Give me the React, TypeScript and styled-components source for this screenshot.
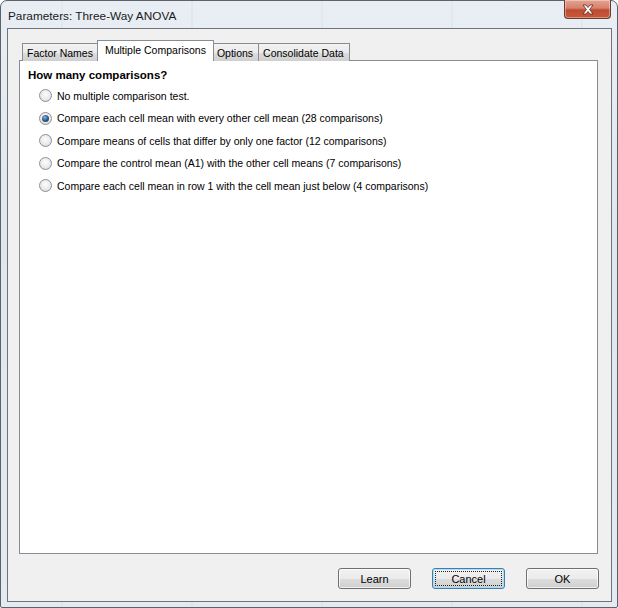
import React, { useState } from "react";
import styled, { createGlobalStyle, css } from "styled-components";

const GlobalStyle = createGlobalStyle`
  html, body {
    margin: 0;
    padding: 0;
    width: 618px;
    height: 608px;
    overflow: hidden;
  }
  body {
    font-family: "Liberation Sans", Arial, sans-serif;
    font-size: 10.5px;
    color: #000;
  }
`;

const tabs = ["Factor Names", "Multiple Comparisons", "Options", "Consolidate Data"];

const options = [
  "No multiple comparison test.",
  "Compare each cell mean with every other cell mean (28 comparisons)",
  "Compare means of cells that differ by only one factor (12 comparisons)",
  "Compare the control mean (A1) with the other cell means (7 comparisons)",
  "Compare each cell mean in row 1 with the cell mean just below (4 comparisons)",
];

const App: React.FC = () => {
  const [active, setActive] = useState(1);
  const [choice, setChoice] = useState(1);

  return (
    <>
      <GlobalStyle />
      <Window>
        <TitleBar>
          <Title>Parameters: Three-Way ANOVA</Title>
          <CloseButton>
            <svg width="14" height="11" viewBox="0 0 14 11">
              <path
                d="M2 1 L5 1 L7 3.5 L9 1 L12 1 L8.6 5.5 L12 10 L9 10 L7 7.5 L5 10 L2 10 L5.4 5.5 Z"
                fill="#fff"
                stroke="#5a2a20"
                strokeWidth="0.8"
              />
            </svg>
          </CloseButton>
        </TitleBar>
        <Client>
          <TabStrip>
            {tabs.map((t, i) => (
              <Tab key={t} selected={i === active} onClick={() => setActive(i)}>
                {t}
              </Tab>
            ))}
          </TabStrip>
          <Panel>
            <Heading>How many comparisons?</Heading>
            <OptionList>
              {options.map((o, i) => (
                <OptionRow key={o} onClick={() => setChoice(i)}>
                  <Radio checked={i === choice} />
                  <span>{o}</span>
                </OptionRow>
              ))}
            </OptionList>
          </Panel>
          <ButtonRow>
            <Button>Learn</Button>
            <Button focused>
              <FocusRing>Cancel</FocusRing>
            </Button>
            <Button>OK</Button>
          </ButtonRow>
        </Client>
      </Window>
    </>
  );
};

const Window = styled.div`
  box-sizing: border-box;
  width: 618px;
  height: 608px;
  display: flex;
  flex-direction: column;
  padding: 0 5px 5px 6px;
  border: 1px solid #5d6168;
  border-radius: 7px 7px 2px 2px;
  background:
    repeating-linear-gradient(90deg, rgba(255,255,255,0) 0 60px, rgba(205,214,225,0.25) 60px 62px, rgba(255,255,255,0) 62px 130px),
    linear-gradient(180deg, #e9eef4 0%, #dfe6ee 40%, #e4eaf1 100%);
`;

const TitleBar = styled.div`
  height: 27px;
  display: flex;
  align-items: flex-start;
  justify-content: space-between;
`;

const Title = styled.div`
  font-family: "Liberation Sans", Arial, sans-serif;
  font-size: 11.8px;
  color: #1a1a1a;
  padding: 8px 0 0 1px;
`;

const CloseButton = styled.div`
  width: 45px;
  height: 18px;
  margin-top: -1px;
  margin-right: 1px;
  display: flex;
  align-items: center;
  justify-content: center;
  border: 1px solid #6b3a33;
  border-top: none;
  border-radius: 0 0 4px 4px;
  background: linear-gradient(180deg, #e5a391 0%, #d7826c 45%, #bf4a2f 55%, #c75a3c 100%);
  box-shadow: inset 0 0 0 1px rgba(255,255,255,0.35);
`;

const Client = styled.div`
  flex: 1;
  display: flex;
  flex-direction: column;
  background: #f0f0f0;
  border: 1px solid #6f737a;
  padding: 12px 13px 10px 11px;
`;

const TabStrip = styled.div`
  display: flex;
  align-items: flex-end;
  padding-left: 4px;
  height: 20px;
  position: relative;
  z-index: 1;
  margin-bottom: -1px;
`;

const Tab = styled.div<{ selected?: boolean }>`
  box-sizing: border-box;
  height: 18px;
  padding: 3px 5px 0 4px;
  border: 1px solid #898c95;
  border-bottom: none;
  margin-left: -1px;
  background: linear-gradient(180deg, #f2f2f2 0%, #ebebeb 50%, #dddddd 51%, #cfcfcf 100%);
  white-space: nowrap;
  cursor: default;
  ${(p) =>
    p.selected &&
    css`
      height: 21px;
      padding: 3px 7px 0 7px;
      margin-left: -2px;
      margin-right: -1px;
      background: #fff;
      position: relative;
      z-index: 2;
    `}
`;

const Panel = styled.div`
  height: 494px;
  box-sizing: border-box;
  background: #fff;
  border: 1px solid #898c95;
  padding: 8px 8px;
`;

const Heading = styled.div`
  font-weight: bold;
  font-size: 11.5px;
  margin-bottom: 8px;
`;

const OptionList = styled.div`
  display: flex;
  flex-direction: column;
  gap: 9px;
  padding-left: 11px;
`;

const OptionRow = styled.label`
  display: flex;
  align-items: center;
  gap: 5px;
  height: 13.5px;
  cursor: default;
`;

const Radio = styled.span<{ checked?: boolean }>`
  box-sizing: border-box;
  width: 13px;
  height: 13px;
  border-radius: 50%;
  border: 1px solid #8e8f8f;
  background: radial-gradient(circle at 50% 40%, #fdfdfd 0%, #e8e8e8 60%, #cfcfcf 100%);
  flex-shrink: 0;
  position: relative;
  ${(p) =>
    p.checked &&
    css`
      &::after {
        content: "";
        position: absolute;
        left: 2px;
        top: 2px;
        width: 7px;
        height: 7px;
        border-radius: 50%;
        background: radial-gradient(circle at 40% 35%, #8fb3dd 0%, #2b5b94 50%, #10305a 100%);
      }
    `}
`;

const ButtonRow = styled.div`
  display: flex;
  justify-content: flex-end;
  gap: 21px;
  margin-top: 14px;
  margin-right: -1px;
`;

const Button = styled.div<{ focused?: boolean }>`
  box-sizing: border-box;
  width: 73px;
  height: 21px;
  display: flex;
  align-items: center;
  justify-content: center;
  border: 1px solid ${(p) => (p.focused ? "#3c7fb1" : "#707070")};
  border-radius: 3px;
  background: linear-gradient(180deg, #f2f2f2 0%, #ebebeb 50%, #dddddd 51%, #cfcfcf 100%);
  box-shadow: inset 0 0 0 1px ${(p) => (p.focused ? "rgba(170,220,245,0.9)" : "rgba(255,255,255,0.7)")};
  font-size: 11px;
`;

const FocusRing = styled.span`
  box-sizing: border-box;
  width: 67px;
  height: 15px;
  display: flex;
  align-items: center;
  justify-content: center;
  border: 1px dotted #222;
`;

export default App;
